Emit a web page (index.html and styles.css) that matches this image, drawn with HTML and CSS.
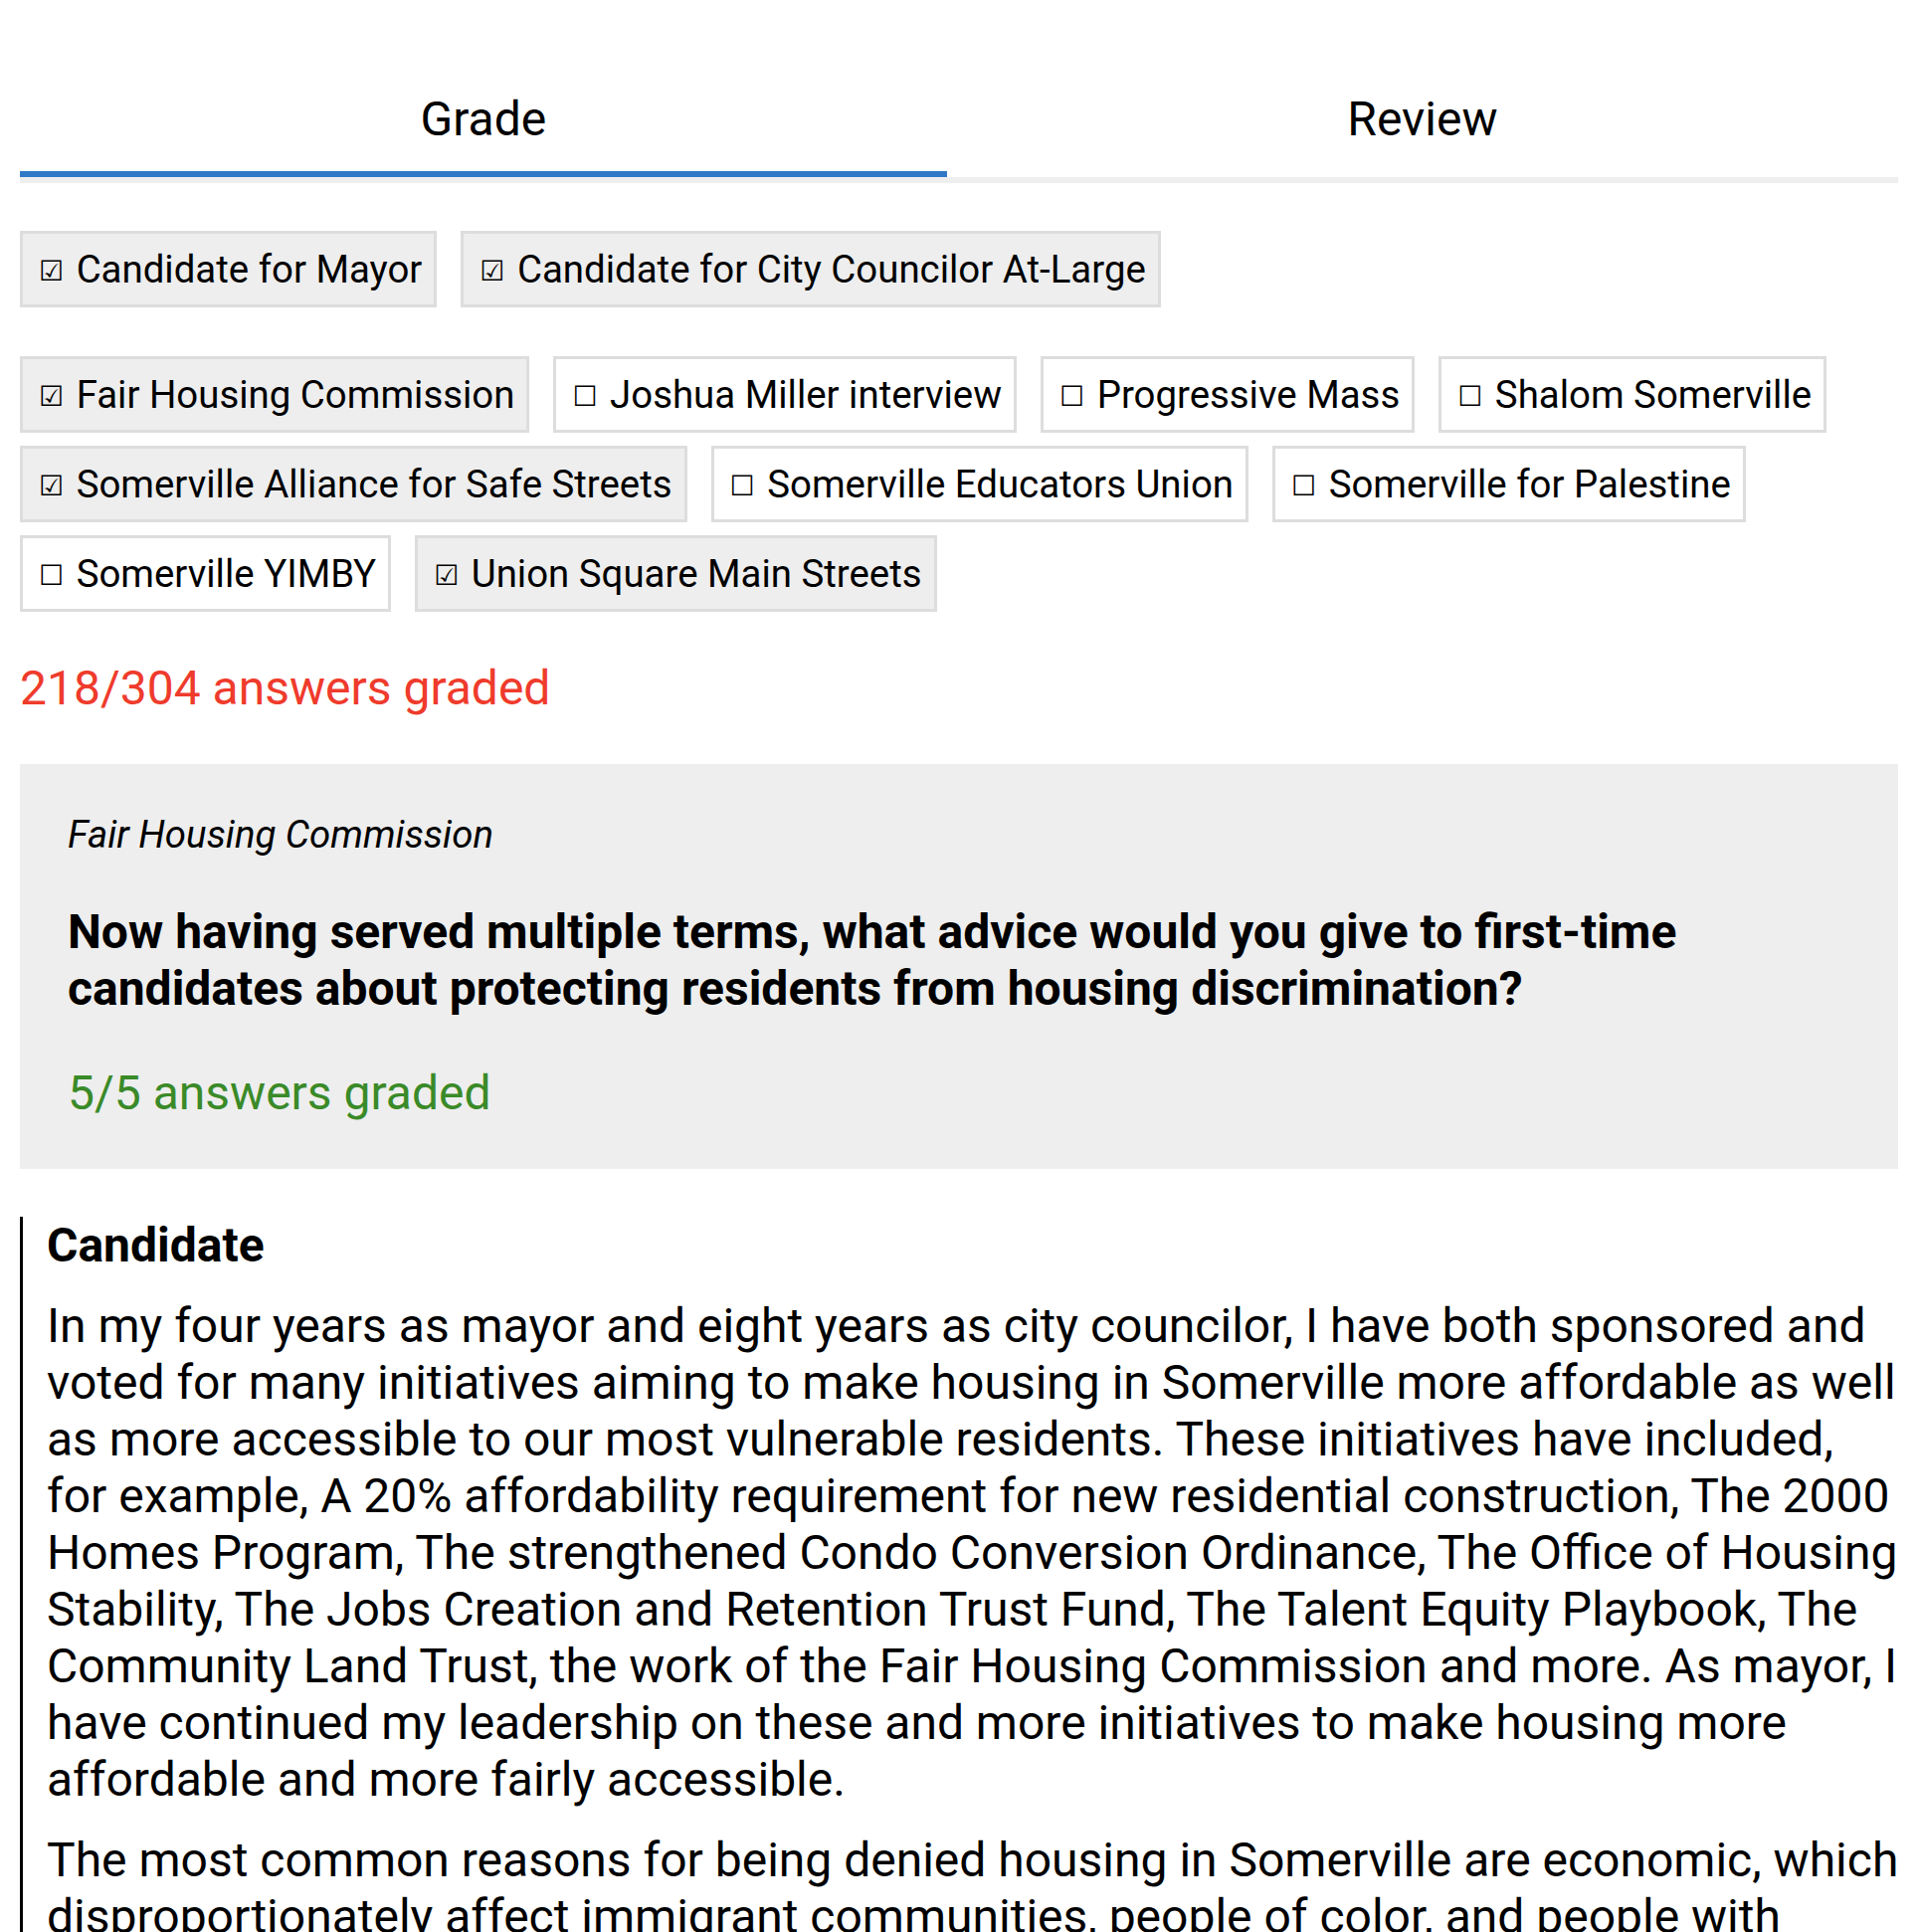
FILE: index.html
```html
<!DOCTYPE html>
<html lang="en">
<head>
  <meta charset="UTF-8">
  <meta name="viewport" content="width=device-width, initial-scale=1.0">
  <title>Grade answers</title>
  <link rel="stylesheet" href="styles.css">
</head>
<body>

  <nav class="tabs">
    <a class="tab active" href="#grade">Grade</a>
    <a class="tab" href="#review">Review</a>
  </nav>

  <div class="filters">
    <div class="chip-row">
      <button class="chip on"><span class="box">☑</span> Candidate for Mayor</button>
      <button class="chip on"><span class="box">☑</span> Candidate for City Councilor At-Large</button>
    </div>
    <div class="chip-row">
      <button class="chip on"><span class="box">☑</span> Fair Housing Commission</button>
      <button class="chip"><span class="box">☐</span> Joshua Miller interview</button>
      <button class="chip"><span class="box">☐</span> Progressive Mass</button>
      <button class="chip"><span class="box">☐</span> Shalom Somerville</button>
      <button class="chip on"><span class="box">☑</span> Somerville Alliance for Safe Streets</button>
      <button class="chip"><span class="box">☐</span> Somerville Educators Union</button>
      <button class="chip"><span class="box">☐</span> Somerville for Palestine</button>
      <button class="chip"><span class="box">☐</span> Somerville YIMBY</button>
      <button class="chip on"><span class="box">☑</span> Union Square Main Streets</button>
    </div>
  </div>

  <p class="progress todo">218/304 answers graded</p>

  <section class="question">
    <p class="source">Fair Housing Commission</p>
    <h3>Now having served multiple terms, what advice would you give to first-time candidates about protecting residents from housing discrimination?</h3>
    <p class="progress done">5/5 answers graded</p>
  </section>

  <article class="answer">
    <h4>Candidate</h4>
    <p>In my four years as mayor and eight years as city councilor, I have both sponsored and voted for many initiatives aiming to make housing in Somerville more affordable as well as more accessible to our most vulnerable residents. These initiatives have included, for example, A 20% affordability requirement for new residential construction, The 2000 Homes Program, The strengthened Condo Conversion Ordinance, The Office of Housing Stability, The Jobs Creation and Retention Trust Fund, The Talent Equity Playbook, The Community Land Trust, the work of the Fair Housing Commission and more. As mayor, I have continued my leadership on these and more initiatives to make housing more affordable and more fairly accessible.</p>
    <p>The most common reasons for being denied housing in Somerville are economic, which disproportionately affect immigrant communities, people of color, and people with disabilities. Candidates should learn how these barriers show up for residents and work with the Fair Housing Commission to address them.</p>
  </article>

</body>
</html>
```

FILE: styles.css
```css
body {
  margin: 0;
  padding: 20px;
  font-family: Roboto, "Liberation Sans", sans-serif;
  font-size: 48px;
  color: #000;
  background-color: #fff;
}

.tabs {
  display: flex;
  margin-top: 47px;
  border-bottom: 6px solid #eee;
}

.tab {
  flex: auto;
  padding: 24px 0;
  text-align: center;
  color: #000;
  text-decoration: none;
  border-bottom: 6px solid transparent;
}

.tab.active {
  border-bottom-color: #3179c7;
}

.filters {
  margin-top: 48px;
}

.chip-row {
  display: flex;
  flex-wrap: wrap;
  gap: 13px 24px;
}

.chip-row + .chip-row {
  margin-top: 49px;
}

.chip {
  padding: 13px 12px 13px 16px;
  font-family: inherit;
  font-size: 0.8em;
  line-height: normal;
  color: #000;
  background-color: #fff;
  border: 3px solid #ddd;
  border-radius: 0;
  cursor: pointer;
}

.chip.on {
  background-color: #eee;
}

.box {
  margin-right: 3px;
  font-family: "DejaVu Sans", sans-serif;
  font-size: 28px;
  vertical-align: 2px;
}

.progress {
  margin: 48px 0;
}

.todo {
  color: #ef3b2c;
}

.done {
  color: #3a8a28;
  margin-bottom: 0;
}

.question {
  padding: 48px;
  background-color: #eee;
}

.source {
  margin: 0;
  font-size: 0.8em;
  font-style: italic;
}

.question h3 {
  margin: 47px 0;
  font-size: 1em;
  line-height: 57px;
}

.answer {
  margin: 48px -6px 0 0;
  padding-left: 24px;
  border-left: 3px solid #000;
}

.answer h4 {
  margin: 0;
  font-size: 1em;
}

.answer p {
  margin: 24px 0;
  line-height: 57px;
}
```
